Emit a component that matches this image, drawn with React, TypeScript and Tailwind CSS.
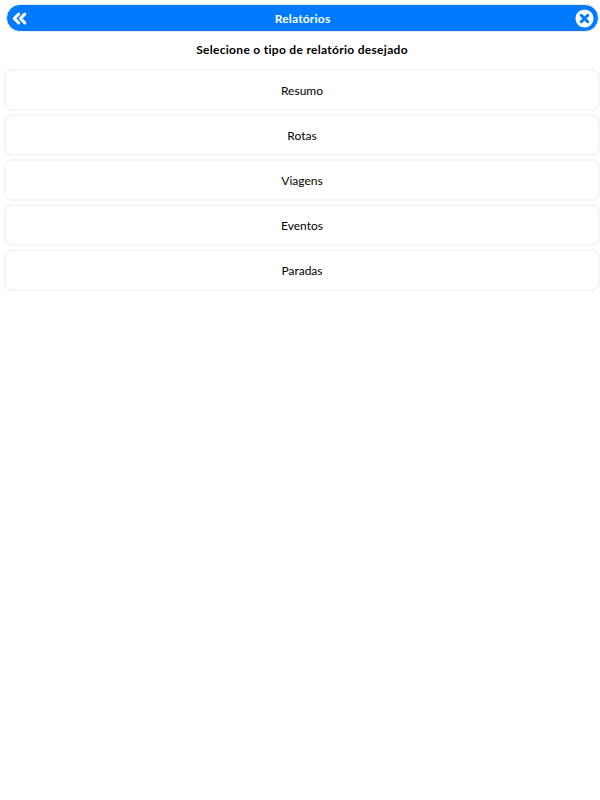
import { ChevronsLeft } from "lucide-react";

const reports = ["Resumo", "Rotas", "Viagens", "Eventos", "Paradas"];

export default function App() {
  return (
    <div className="min-h-[800px] bg-white pt-[4px] pl-[4px] font-['Lato',sans-serif] text-black">
      <header className="ml-[2px] flex h-[28px] w-[593px] items-center justify-between rounded-[14px] border border-[#e9eef5] bg-[#007bff] pl-[2px] pr-[4px] text-white">
        <ChevronsLeft className="size-[21px]" strokeWidth={3.5} />
        <h1 className="pt-[1px] text-[12px] font-bold tracking-[0.2px]">Relatórios</h1>
        <svg viewBox="0 0 20 20" className="size-[19px]" aria-hidden="true">
          <circle cx="10" cy="10" r="9.5" fill="#fff" />
          <path
            d="M6.6 6.6 13.4 13.4M13.4 6.6 6.6 13.4"
            stroke="#007bff"
            strokeWidth="3.2"
            strokeLinecap="round"
          />
        </svg>
      </header>

      <p className="mt-[9px] w-[596px] text-center text-[12px] leading-[18px] font-bold tracking-[0.3px]">
        Selecione o tipo de relatório desejado
      </p>

      <div className="mt-[10px] flex w-[596px] flex-col gap-[3px]">
        {reports.map((report) => (
          <button
            key={report}
            className="h-[42px] rounded-[8px] border-2 border-[#f5f5f8] bg-white pt-[1px] text-center text-[12px]"
          >
            {report}
          </button>
        ))}
      </div>
    </div>
  );
}
